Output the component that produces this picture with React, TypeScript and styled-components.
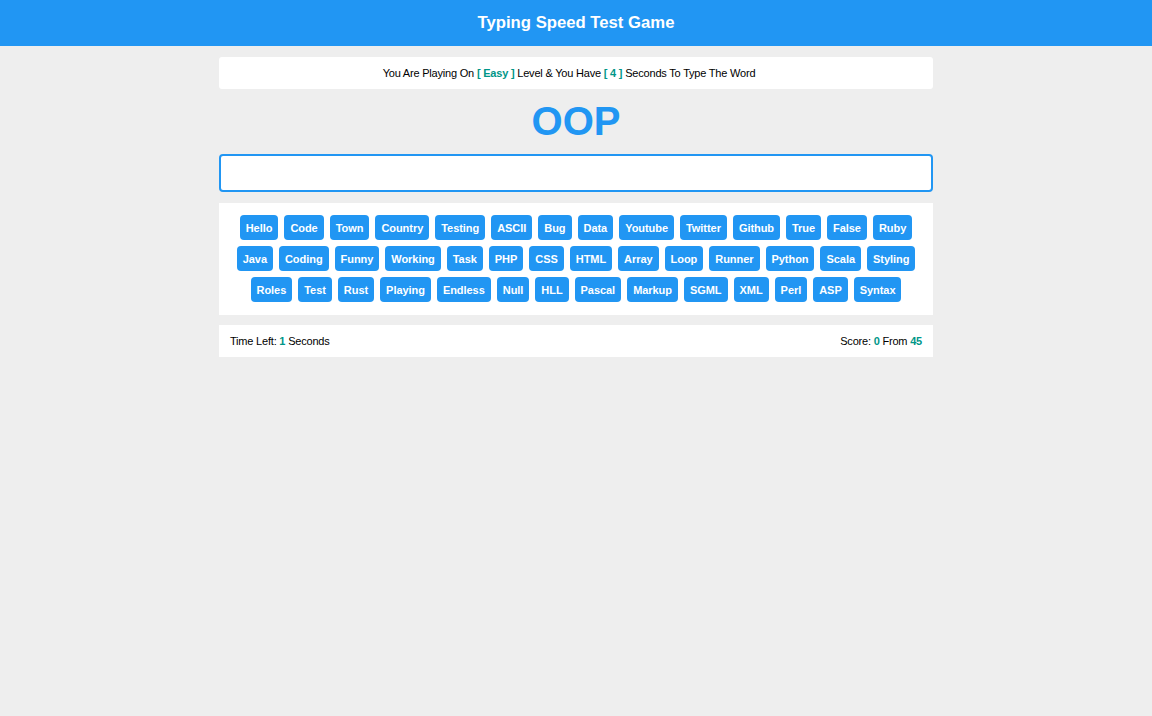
import React from "react";
import styled, { createGlobalStyle } from "styled-components";

const GlobalStyle = createGlobalStyle`
  * { box-sizing: border-box; }
  html, body { margin: 0; padding: 0; }
  body {
    background: #eeeeee;
    font-family: "Liberation Sans", Arial, sans-serif;
    color: #000;
  }
`;

const Header = styled.h1`
  margin: 0;
  height: 46px;
  background: #2196f3;
  color: #fff;
  font-size: 16.7px;
  font-weight: bold;
  display: flex;
  align-items: center;
  justify-content: center;
`;

const Container = styled.main`
  width: 714px;
  margin: 11px auto 0;
  display: flex;
  flex-direction: column;
`;

const Message = styled.div`
  background: #fff;
  border-radius: 3px;
  height: 32px;
  padding-right: 14px;
  display: flex;
  align-items: center;
  justify-content: center;
  font-size: 11px;
  letter-spacing: -0.2px;
`;

const Accent = styled.span`
  color: #009688;
  font-weight: bold;
`;

const Word = styled.div`
  color: #2196f3;
  font-size: 40px;
  font-weight: bold;
  text-align: center;
  height: 65px;
  line-height: 65px;
`;

const Input = styled.input`
  display: block;
  width: 100%;
  height: 38px;
  border: 2px solid #2196f3;
  border-radius: 4px;
  outline: none;
  background: #fff;
  font-family: inherit;
  font-size: 16px;
  padding: 0 10px;
`;

const Words = styled.div`
  margin-top: 11px;
  background: #fff;
  padding: 12px 10px 13px;
  display: flex;
  flex-wrap: wrap;
  justify-content: center;
  gap: 6px 6px;
`;

const Tag = styled.span`
  background: #2196f3;
  color: #fff;
  font-size: 11px;
  font-weight: bold;
  letter-spacing: -0.05px;
  height: 25px;
  padding: 0 6px;
  border-radius: 4px;
  display: inline-flex;
  align-items: center;
`;

const Control = styled.div`
  margin-top: 10px;
  background: #fff;
  height: 32px;
  padding: 0 11px;
  display: flex;
  align-items: center;
  justify-content: space-between;
  font-size: 11px;
  letter-spacing: -0.2px;
`;

const words = [
  "Hello", "Code", "Town", "Country", "Testing", "ASCII", "Bug", "Data", "Youtube", "Twitter",
  "Github", "True", "False", "Ruby", "Java", "Coding", "Funny", "Working", "Task", "PHP", "CSS",
  "HTML", "Array", "Loop", "Runner", "Python", "Scala", "Styling", "Roles", "Test", "Rust",
  "Playing", "Endless", "Null", "HLL", "Pascal", "Markup", "SGML", "XML", "Perl", "ASP", "Syntax",
];

export default function App() {
  return (
    <>
      <GlobalStyle />
      <Header>Typing Speed Test Game</Header>
      <Container>
        <Message>
          You Are Playing On&nbsp;<Accent>[ Easy ]</Accent>&nbsp;Level &amp; You Have&nbsp;
          <Accent>[ 4 ]</Accent>&nbsp;Seconds To Type The Word
        </Message>
        <Word>OOP</Word>
        <Input type="text" />
        <Words>
          {words.map((w) => (
            <Tag key={w}>{w}</Tag>
          ))}
        </Words>
        <Control>
          <span>
            Time Left: <Accent>1</Accent> Seconds
          </span>
          <span>
            Score: <Accent>0</Accent> From <Accent>45</Accent>
          </span>
        </Control>
      </Container>
    </>
  );
}
